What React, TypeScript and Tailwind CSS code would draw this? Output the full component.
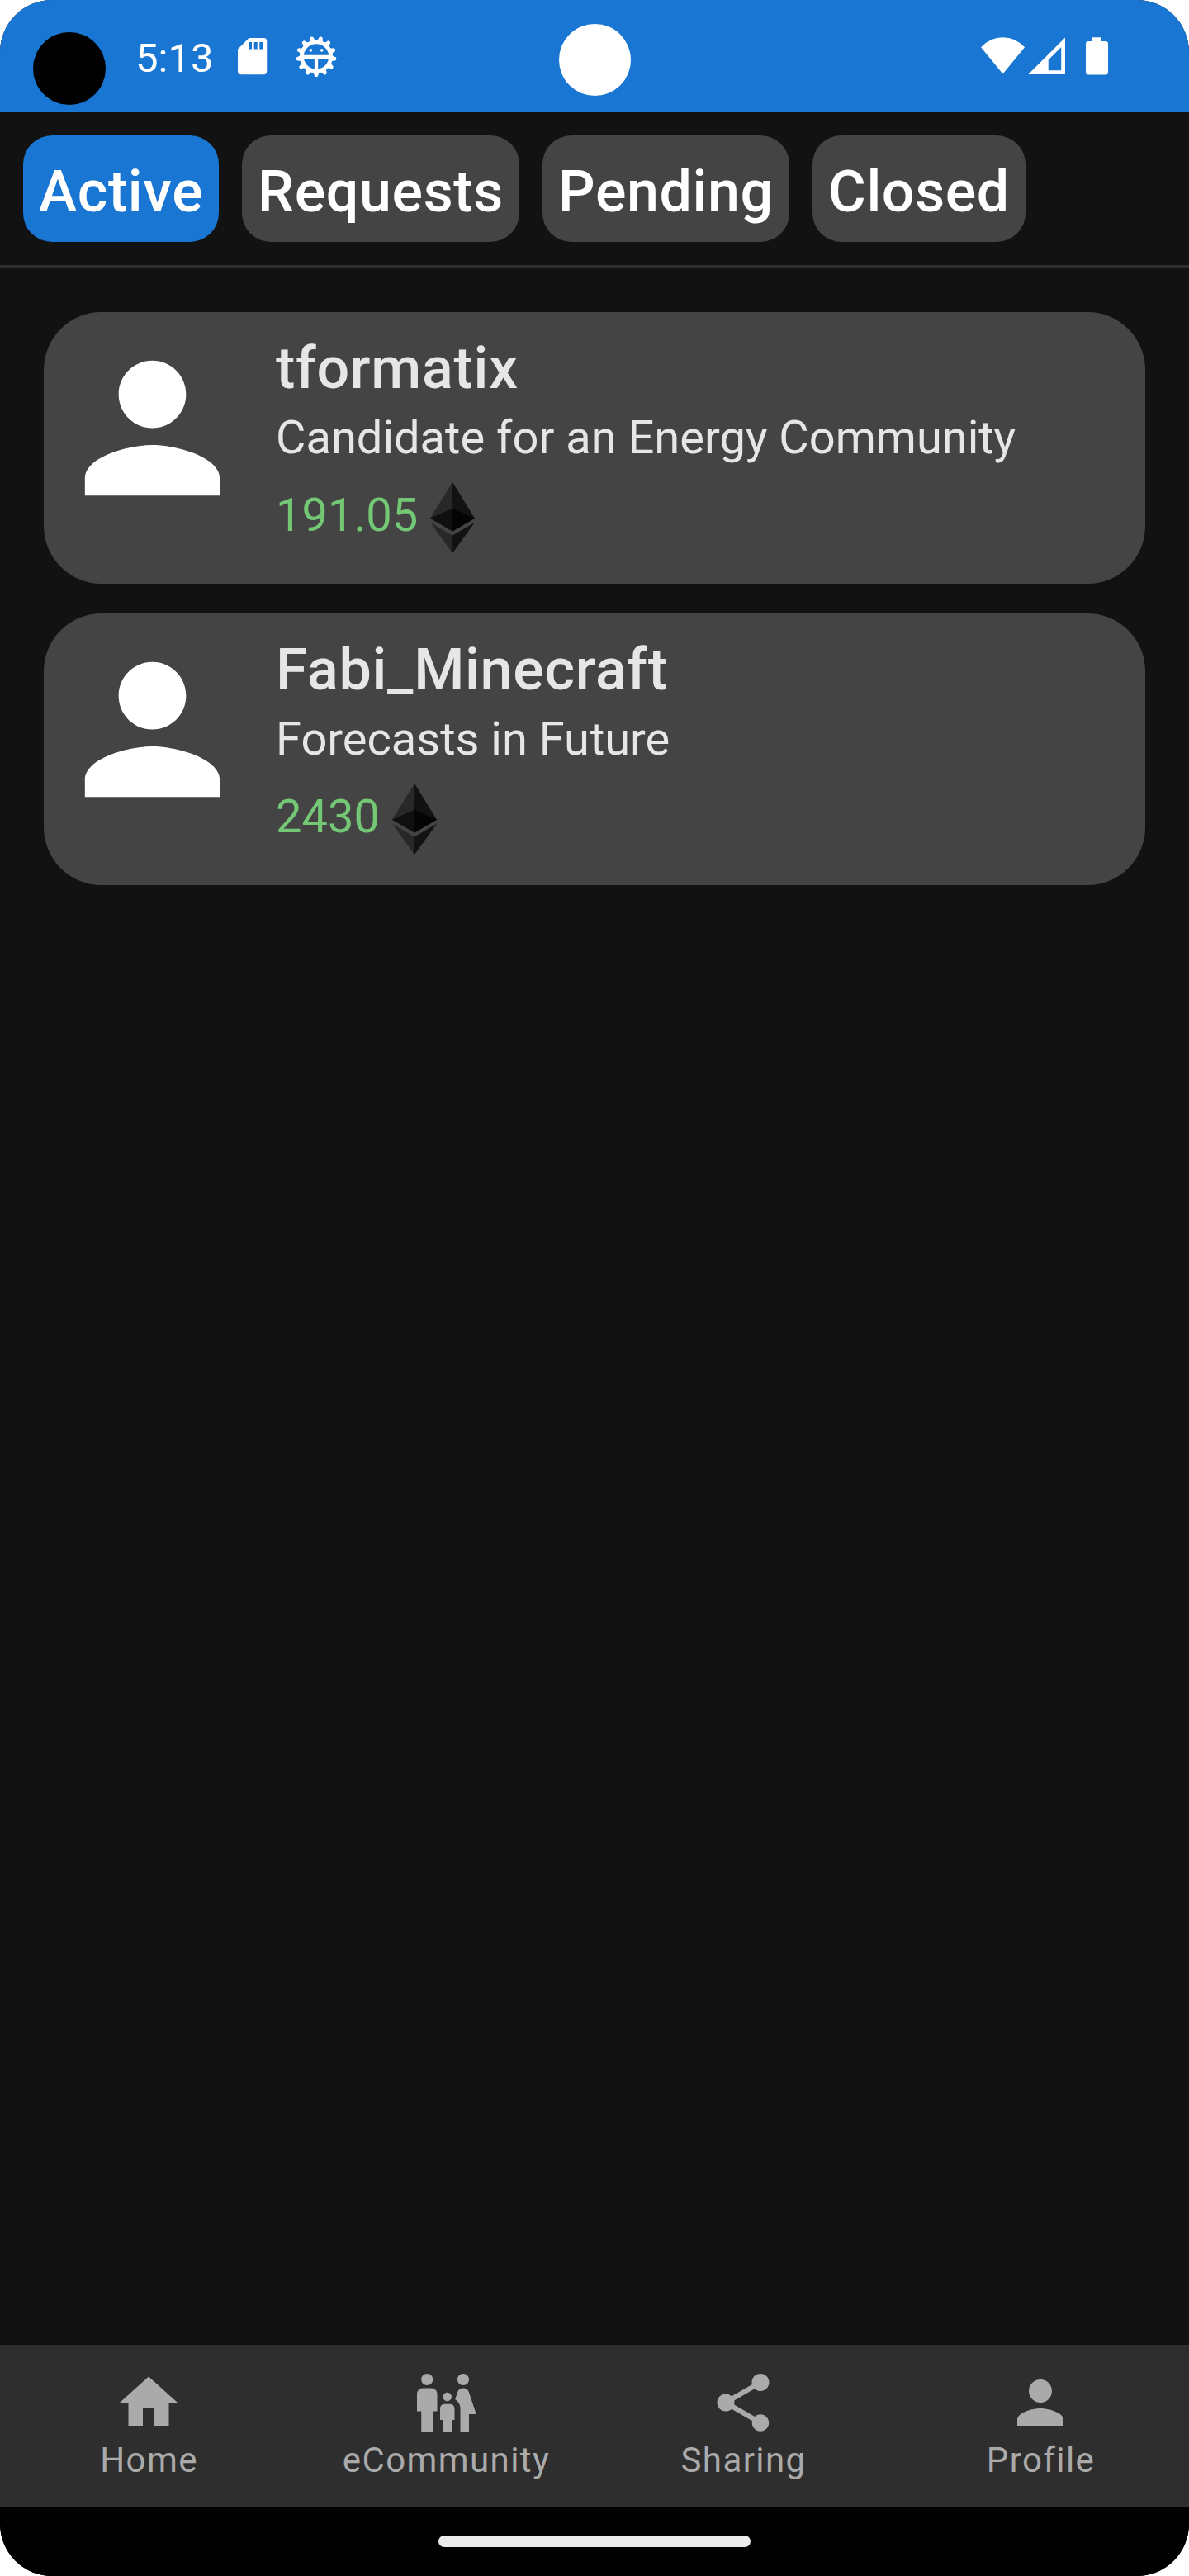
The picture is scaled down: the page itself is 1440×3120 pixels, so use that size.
import type { ReactNode } from "react";

const PERSON =
  "M12 12c2.21 0 4-1.79 4-4s-1.79-4-4-4-4 1.79-4 4 1.79 4 4 4zm0 2c-2.67 0-8 1.34-8 4v2h16v-2c0-2.66-5.33-4-8-4z";
const HOME = "M10 20v-6h4v6h5v-8h3L12 3 2 12h3v8z";
const SHARE =
  "M18 16.08c-.76 0-1.44.3-1.96.77L8.91 12.7c.05-.23.09-.46.09-.7s-.04-.47-.09-.7l7.05-4.11c.54.5 1.25.81 2.04.81 1.66 0 3-1.34 3-3s-1.34-3-3-3-3 1.34-3 3c0 .24.04.47.09.7L8.04 9.81C7.5 9.31 6.79 9 6 9c-1.66 0-3 1.34-3 3s1.34 3 3 3c.79 0 1.5-.31 2.04-.81l7.12 4.16c-.05.21-.08.43-.08.65 0 1.61 1.31 2.92 2.92 2.92 1.61 0 2.92-1.31 2.92-2.92s-1.31-2.92-2.92-2.92z";
const FAMILY =
  "M16 4c0-1.11.89-2 2-2s2 .89 2 2-.89 2-2 2-2-.89-2-2zm4 18v-6h2.5l-2.54-7.63C19.68 7.55 18.92 7 18.06 7h-.12c-.86 0-1.63.55-1.9 1.37l-.86 2.58c1.08.6 1.82 1.73 1.82 3.05v8h3zm-7.5-10.5c.83 0 1.5-.67 1.5-1.5s-.67-1.5-1.5-1.5S11 9.17 11 10s.67 1.5 1.5 1.5zM5.5 6c1.11 0 2-.89 2-2s-.89-2-2-2-2 .89-2 2 .89 2 2 2zm2 16v-7H9V9c0-1.1-.9-2-2-2H4c-1.1 0-2 .9-2 2v6h1.5v7h4zm6.5 0v-4h1v-4c0-.82-.68-1.5-1.5-1.5h-2c-.82 0-1.5.68-1.5 1.5v4h1v4h3z";

function Icon({ d, className }: { d: string; className: string }) {
  return (
    <svg viewBox="0 0 24 24" fill="currentColor" className={className}>
      <path d={d} />
    </svg>
  );
}

function GearFace() {
  const teeth = Array.from({ length: 13 }, (_, i) => 90 + (i * 360) / 13);
  return (
    <svg viewBox="-25 -25.5 50 50" className="ml-[34px] size-[50px]" stroke="#fff" fill="none">
      <circle r="17.6" strokeWidth="4.8" />
      {teeth.map((a) => (
        <path
          key={a}
          d="M17.5 -4.8Q20 -2.6 22.2 -2.4A2.4 2.4 0 0 1 22.2 2.4Q20 2.6 17.5 4.8Z"
          fill="#fff"
          stroke="none"
          transform={`rotate(${a})`}
        />
      ))}
      <path d="M-17 0.300H17M0 0V17" strokeWidth="4.2" />
      <g fill="#fff" stroke="none">
        <circle cx="-6.7" cy="-7.6" r="1.8" />
        <circle cx="6.7" cy="-7.6" r="1.8" />
      </g>
    </svg>
  );
}

function StatusBar() {
  return (
    <header className="relative flex h-[136px] shrink-0 items-start bg-[#1976d2] text-white">
      <div className="mt-[39px] ml-10 size-[88px] rounded-full bg-black" />
      <div className="mt-[42px] ml-[36px] w-[95px] text-[49px] leading-[57px]">5:13</div>
      <div className="mt-[43px] flex items-center">
        <svg viewBox="0 0 36 45" className="ml-[29px] h-[45px] w-[36px]" fill="#fff">
          <path
            fillRule="evenodd"
            d="M13.5 0H31.5Q35.2 0 35.2 4V40.5Q35.2 44.3 31.5 44.3H4Q0 44.3 0 40.5V13.5ZM13 5V13.5H17V5ZM19.7 5V13.5H23.7V5ZM26.3 5V13.5H30.3V5Z"
          />
        </svg>
        <GearFace />
      </div>
      <div className="absolute top-[29px] left-[677px] size-[87px] rounded-full bg-white" />
      <svg viewBox="0 0 160 50" className="mt-[43px] mr-[95px] ml-auto h-[50px] w-[160px]" fill="#fff">
        <path d="M3 14.2Q14 2.2 29.5 2.2T56 14.2L29.5 46.5Z" />
        <path fillRule="evenodd" d="M60.3 47L105 2.5V47ZM84.7 42.2H100.2V14L84.7 29.5Z" />
        <path d="M137.8 2.2H149V7H154Q157 7 157 10V44.5Q157 47.5 154 47.5H133Q130 47.5 130 44.5V10Q130 7 133 7H137.8Z" />
      </svg>
    </header>
  );
}

function Tab({ children, className }: { children: ReactNode; className: string }) {
  return (
    <button
      className={
        "flex h-[129px] items-start justify-center rounded-[35px] pt-[27px] text-[70px] leading-[82px] font-medium tracking-[0.6px] whitespace-nowrap text-white " +
        className
      }
    >
      {children}
    </button>
  );
}

function Ethereum() {
  return (
    <svg viewBox="0 0 784 1277" preserveAspectRatio="none" className="mt-[6px] ml-[15px] h-[86px] w-[54px]">
      <path fill="#282828" d="M392 0L0 650L392 882Z" />
      <path fill="#121212" d="M392 0L784 650L392 882Z" />
      <path fill="#101010" d="M392 472L0 650L392 882Z" />
      <path fill="#040404" d="M392 472L784 650L392 882Z" />
      <path fill="#282828" d="M392 956L0 725L392 1277Z" />
      <path fill="#121212" d="M392 956L784 725L392 1277Z" />
    </svg>
  );
}

function Card({ name, text, amount }: { name: string; text: string; amount: string }) {
  return (
    <article className="flex h-[329px] rounded-[70px] bg-[#444444] pt-[18px] pl-[9px]">
      <Icon d={PERSON} className="size-[245px] shrink-0 text-white" />
      <div className="ml-[27px] text-[#e6e6e6]">
        <h2 className="mt-[9px] text-[70px] leading-[82px] font-medium tracking-[0.7px]">{name}</h2>
        <p className="mt-[3px] text-[56px] leading-[80px]">{text}</p>
        <div className="mt-[8px] flex items-start">
          <span className="text-[56px] leading-[92px] text-[#74c774]">{amount}</span>
          <Ethereum />
        </div>
      </div>
    </article>
  );
}

function NavItem({ d, label }: { d: string; label: string }) {
  return (
    <a className="flex flex-col items-center pt-[28px] text-[#aaaaaa]">
      <Icon d={d} className="size-[84px]" />
      <span className="mt-[3px] ml-[1px] text-[42px] leading-[49px] tracking-[1.4px]">{label}</span>
    </a>
  );
}

export default function App() {
  return (
    <div className="h-[3120px] w-[1440px] overflow-hidden bg-white">
      <div className="flex h-full flex-col overflow-hidden rounded-[63px] bg-[#121212] font-[Roboto,sans-serif]">
        <StatusBar />
        <nav className="flex h-[189px] shrink-0 gap-[28px] border-b-4 border-[#2e2e2e] pt-[28px] pl-[28px]">
          <Tab className="w-[237px] bg-[#1976d2]">Active</Tab>
          <Tab className="w-[336px] bg-[#444444]">Requests</Tab>
          <Tab className="w-[299px] bg-[#444444]">Pending</Tab>
          <Tab className="w-[258px] bg-[#444444]">Closed</Tab>
        </nav>
        <main className="flex grow flex-col gap-[36px] px-[53px] pt-[53px]">
          <Card name="tformatix" text="Candidate for an Energy Community" amount="191.05" />
          <Card name="Fabi_Minecraft" text="Forecasts in Future" amount="2430" />
        </main>
        <nav className="grid h-[196px] shrink-0 grid-cols-4 bg-[#2e2e2e]">
          <NavItem d={HOME} label="Home" />
          <NavItem d={FAMILY} label="eCommunity" />
          <NavItem d={SHARE} label="Sharing" />
          <NavItem d={PERSON} label="Profile" />
        </nav>
        <footer className="flex h-[84px] shrink-0 items-center justify-center bg-black">
          <div className="h-[14px] w-[378px] rounded-full bg-[#ebebeb]" />
        </footer>
      </div>
    </div>
  );
}
